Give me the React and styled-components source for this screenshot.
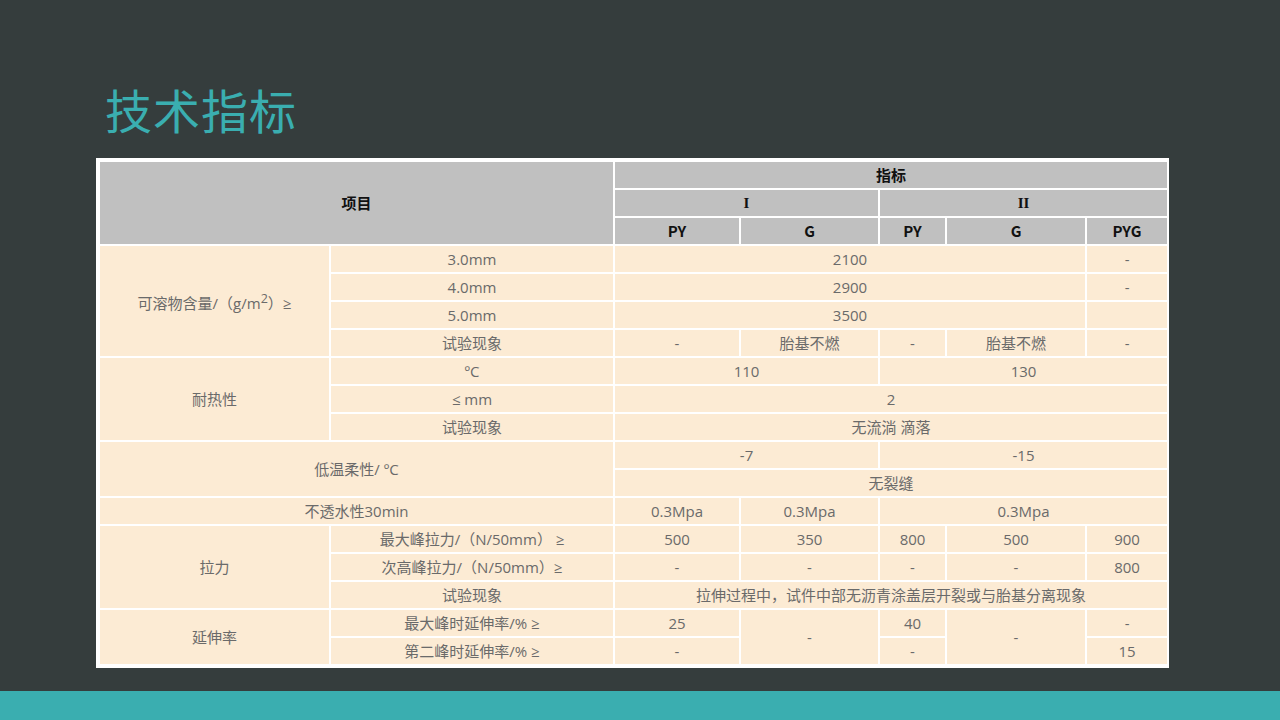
import React from "react";
import styled, { createGlobalStyle } from "styled-components";

const Global = createGlobalStyle`
  html, body { margin: 0; padding: 0; background: #343c3c; }
  body { font-family: "Open Sans", "Noto Sans CJK SC", sans-serif; }
`;

const Page = styled.div`
  width: 1280px; height: 720px; background: #353d3d;
  display: flex; flex-direction: column; overflow: hidden;
`;
const Main = styled.div`flex: 1; padding: 80px 0 0 96px;`;
const Title = styled.h1`
  margin: 0 0 20px 9px; font-weight: 400; font-size: 47px; line-height: 58px;
  color: #3aaeb0; font-family: "Noto Sans CJK SC", sans-serif; letter-spacing: 1px;
`;
const Frame = styled.div`
  width: 1073px; background: #fff; padding: 2px 0 2px 2px; box-sizing: border-box;
`;
const Table = styled.table`
  border-collapse: collapse; table-layout: fixed; width: 1069px;
  td, th { border: 2px solid #fff; height: 26px; padding: 0; text-align: center;
    font-size: 15px; line-height: 24px; }
`;
const H = styled.th`
  background: #c0c0c0; color: #111; font-weight: 700; font-size: 15px !important;
  font-family: "Noto Sans CJK SC", sans-serif;
`;
const C = styled.td`
  background: #fcebd4; color: #6a6a6a; font-family: "Open Sans", "Noto Sans CJK SC", sans-serif;
`;
const Bar = styled.div`height: 29px; background: #3aaeb0;`;

export default function App() {
  return (
    <Page>
      <Global />
      <Main>
        <Title>技术指标</Title>
        <Frame>
          <Table>
            <colgroup>
              {[231, 284, 126, 139, 67, 140, 82].map((w, i) => <col key={i} style={{ width: w }} />)}
            </colgroup>
            <tbody>
              <tr><H colSpan={2} rowSpan={3}>项目</H><H colSpan={5}>指标</H></tr>
              <tr><H colSpan={2} style={{fontFamily:"Liberation Serif"}}>I</H><H colSpan={3} style={{fontFamily:"Liberation Serif"}}>II</H></tr>
              <tr><H>PY</H><H>G</H><H>PY</H><H>G</H><H>PYG</H></tr>
              <tr><C rowSpan={4}>可溶物含量/（g/m<sup>2</sup>）≥</C><C>3.0mm</C><C colSpan={4}>2100</C><C>-</C></tr>
              <tr><C>4.0mm</C><C colSpan={4}>2900</C><C>-</C></tr>
              <tr><C>5.0mm</C><C colSpan={4}>3500</C><C></C></tr>
              <tr><C>试验现象</C><C>-</C><C>胎基不燃</C><C>-</C><C>胎基不燃</C><C>-</C></tr>
              <tr><C rowSpan={3}>耐热性</C><C>ºC</C><C colSpan={2}>110</C><C colSpan={3}>130</C></tr>
              <tr><C>≤ mm</C><C colSpan={5}>2</C></tr>
              <tr><C>试验现象</C><C colSpan={5}>无流淌 滴落</C></tr>
              <tr><C colSpan={2} rowSpan={2}>低温柔性/ ºC</C><C colSpan={2}>-7</C><C colSpan={3}>-15</C></tr>
              <tr><C colSpan={5}>无裂缝</C></tr>
              <tr><C colSpan={2}>不透水性30min</C><C>0.3Mpa</C><C>0.3Mpa</C><C colSpan={3}>0.3Mpa</C></tr>
              <tr><C rowSpan={3}>拉力</C><C>最大峰拉力/（N/50mm） ≥</C><C>500</C><C>350</C><C>800</C><C>500</C><C>900</C></tr>
              <tr><C>次高峰拉力/（N/50mm）≥</C><C>-</C><C>-</C><C>-</C><C>-</C><C>800</C></tr>
              <tr><C>试验现象</C><C colSpan={5}>拉伸过程中，试件中部无沥青涂盖层开裂或与胎基分离现象</C></tr>
              <tr><C rowSpan={2}>延伸率</C><C>最大峰时延伸率/% ≥</C><C>25</C><C rowSpan={2}>-</C><C>40</C><C rowSpan={2}>-</C><C>-</C></tr>
              <tr><C>第二峰时延伸率/% ≥</C><C>-</C><C>-</C><C>15</C></tr>
            </tbody>
          </Table>
        </Frame>
      </Main>
      <Bar />
    </Page>
  );
}
